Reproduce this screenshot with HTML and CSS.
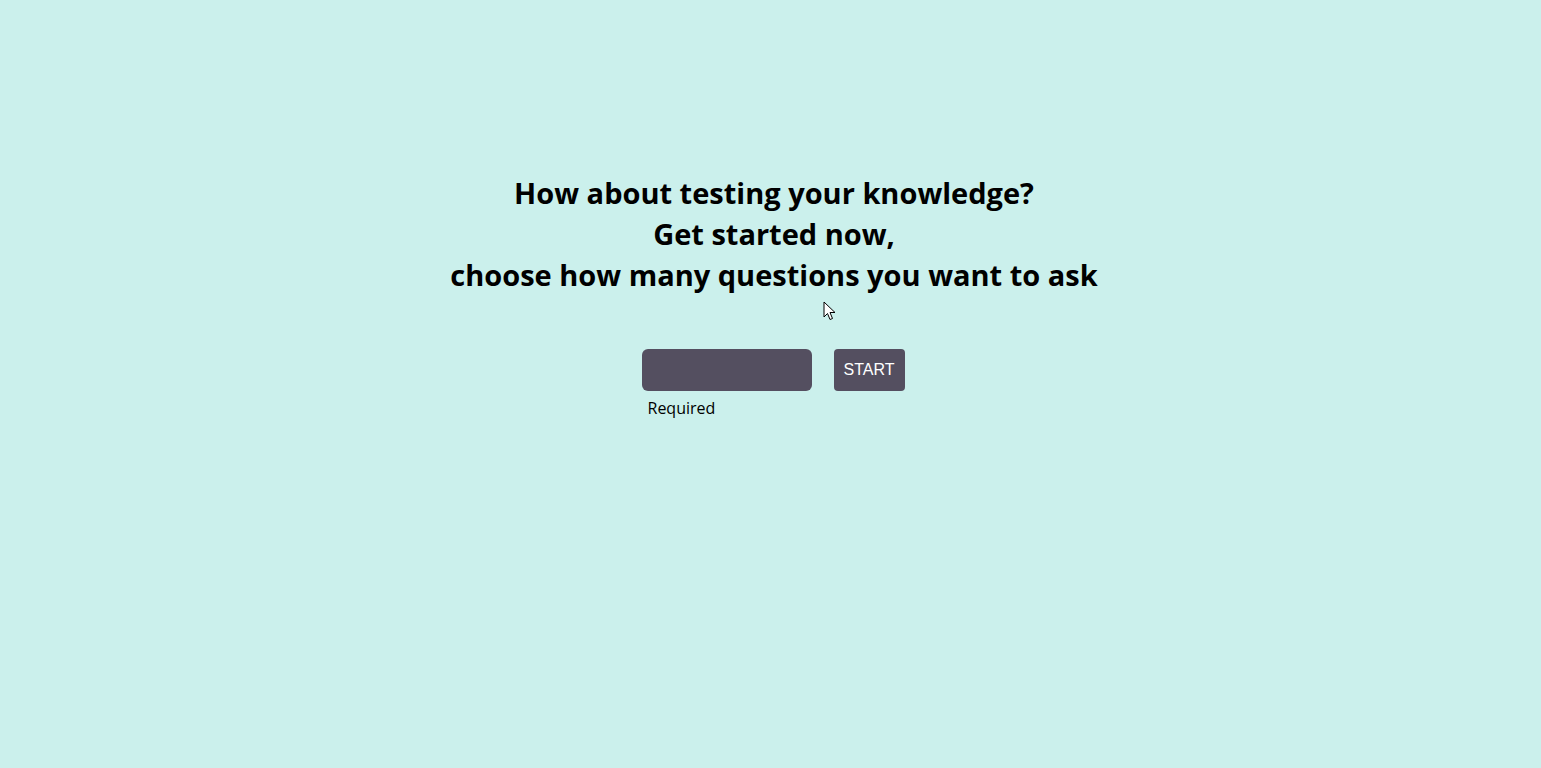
FILE: index.html
```html
<!DOCTYPE html>
<html lang="en">
<head>
<meta charset="utf-8">
<title>Quiz</title>
<link rel="stylesheet" href="styles.css">
</head>
<body>
<main class="page">
  <h1 class="title">How about testing your knowledge?<br>Get started now,<br>choose how many questions you want to ask</h1>
  <form class="form">
    <div class="field">
      <input class="count" type="text" aria-label="Number of questions">
      <span class="hint">Required</span>
    </div>
    <button class="start" type="button">START</button>
  </form>
</main>
<svg class="cursor" width="14" height="21" viewBox="0 0 14 21"><path d="M1 1 L1 16 L4.5 12.5 L7 18.5 L9.5 17.5 L7 11.5 L12 11.5 Z" fill="#fff" stroke="#000" stroke-width="1" stroke-linejoin="miter"/></svg>
</body>
</html>
```
FILE: styles.css
```css
html, body {
  margin: 0;
  padding: 0;
  height: 100%;
}
body {
  background: #cbf0ec;
  font-family: "Open Sans", "Noto Sans", sans-serif;
  color: #000;
  position: relative;
}
.page {
  display: flex;
  flex-direction: column;
  align-items: center;
  padding: 172px 0 0 7px;
}
.title {
  margin: 0;
  font-size: 29px;
  line-height: 41px;
  font-weight: 700;
  text-align: center;
}
.form {
  display: flex;
  align-items: flex-start;
  gap: 22px;
  margin: 54px 2px 0 0;
}
.field {
  display: flex;
  flex-direction: column;
}
.count {
  box-sizing: border-box;
  width: 170px;
  height: 42px;
  border: none;
  border-radius: 6px;
  background: #544f60;
  color: #fff;
  padding: 0 10px;
  outline: none;
}
.hint {
  font-size: 16px;
  line-height: 22px;
  padding: 6px 0 0 6px;
}
.start {
  box-sizing: border-box;
  width: 71px;
  height: 42px;
  border: none;
  border-radius: 4px;
  background: #544f60;
  color: #fff;
  font-family: "Liberation Sans", Arial, sans-serif;
  font-size: 16px;
  padding: 0 0 1px;
}
.cursor {
  position: absolute;
  left: 823px;
  top: 301px;
}
```
